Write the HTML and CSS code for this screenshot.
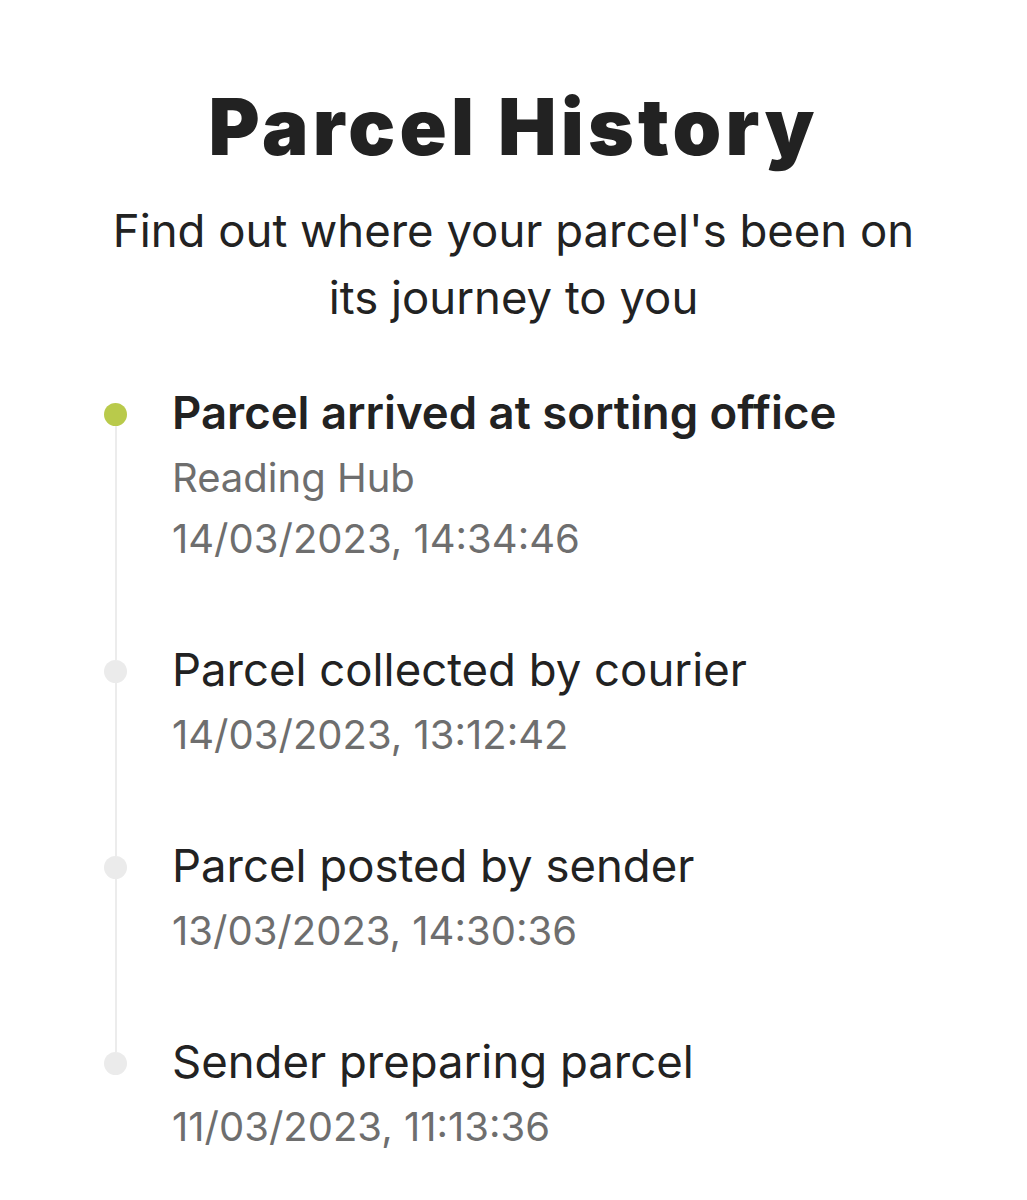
FILE: index.html
```html
<!DOCTYPE html>
<html lang="en">
<head>
    <meta charset="UTF-8">
    <title>Parcel History</title>
    <link rel="stylesheet" href="styles.css">
</head>
<body>

<main class="history">
    <header class="intro">
        <h1>Parcel History</h1>
        <p>Find out where your parcel's been on its journey to you</p>
    </header>

    <ol class="timeline">
        <li class="event current">
            <div class="marker"><span class="dot"></span><span class="line"></span></div>
            <div class="info">
                <h2>Parcel arrived at sorting office</h2>
                <p class="place">Reading Hub</p>
                <p class="time">14/03/2023, 14:34:46</p>
            </div>
        </li>
        <li class="event">
            <div class="marker"><span class="dot"></span><span class="line"></span></div>
            <div class="info">
                <h2>Parcel collected by courier</h2>
                <p class="time">14/03/2023, 13:12:42</p>
            </div>
        </li>
        <li class="event">
            <div class="marker"><span class="dot"></span><span class="line"></span></div>
            <div class="info">
                <h2>Parcel posted by sender</h2>
                <p class="time">13/03/2023, 14:30:36</p>
            </div>
        </li>
        <li class="event">
            <div class="marker"><span class="dot"></span></div>
            <div class="info">
                <h2>Sender preparing parcel</h2>
                <p class="time">11/03/2023, 11:13:36</p>
            </div>
        </li>
    </ol>
</main>

</body>
</html>
```

FILE: styles.css
```css
*, *::before, *::after {
  padding: 0;
  margin: 0;
  box-sizing: border-box;
}

body {
  background-color: #fff;
  color: #222;
  font-family: Inter, "Noto Sans", sans-serif;
}

.history {
  padding: 72px 0 20px;
}

.intro {
  text-align: center;

  h1 {
    font-size: 78px;
    font-weight: 900;
    line-height: 110px;
    letter-spacing: 4.2px;
    color: #222;
  }

  p {
    width: 840px;
    margin: 15px auto 0;
    font-size: 45.5px;
    line-height: 67px;
    color: #222;
  }
}

.timeline {
  list-style: none;
  margin-top: 48px;
  padding-left: 104px;
}

.event {
  display: flex;
  gap: 45px;

  .marker {
    width: 23px;
    display: flex;
    flex-direction: column;
    align-items: center;
  }

  .dot {
    width: 23px;
    height: 23px;
    margin-top: 24px;
    border-radius: 50%;
    background-color: #ebebeb;
  }

  .line {
    flex: 1;
    width: 2px;
    margin-bottom: -24px;
    background-color: #ececec;
  }

  .info {
    padding-bottom: 67px;
  }

  h2 {
    font-size: 45.5px;
    font-weight: 400;
    line-height: 68px;
  }

  p {
    font-size: 40px;
    line-height: 61px;
    color: #6e6e6e;
  }

  &.current {
    .dot { background-color: #b9ca4b; }
    h2 { font-weight: 600; }
  }
}
```
